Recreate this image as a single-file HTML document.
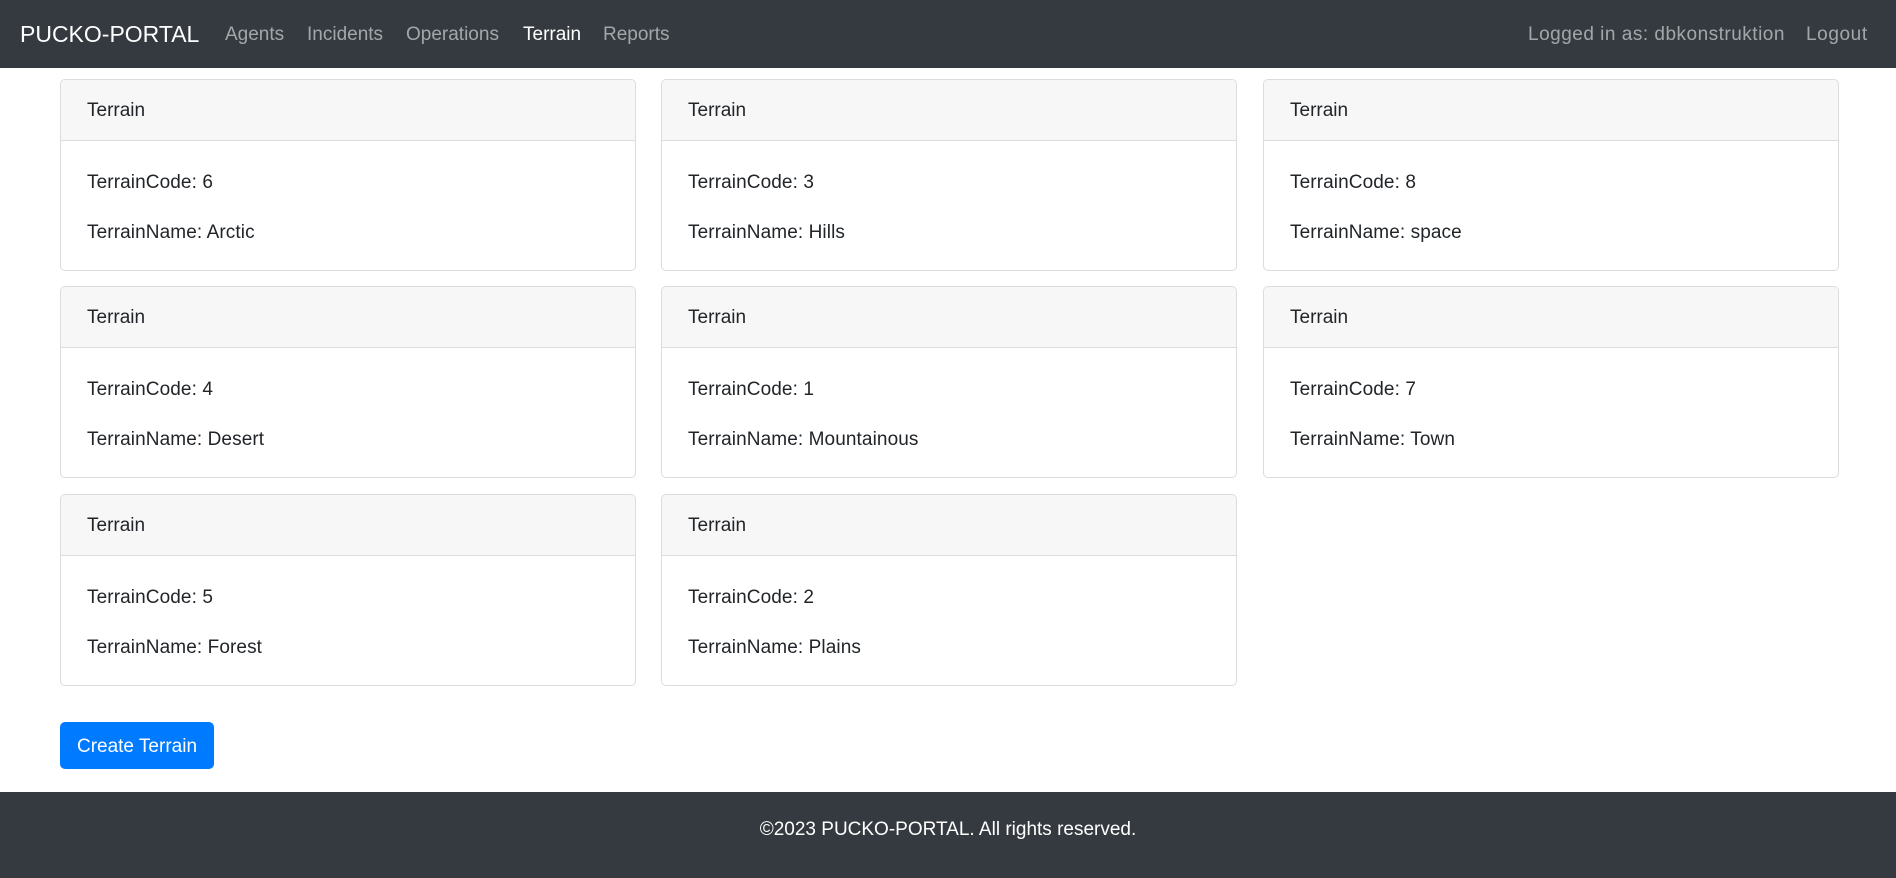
<!DOCTYPE html>
<html><head><style>
*{box-sizing:border-box;margin:0;padding:0}
body{width:1896px;height:878px;position:relative;font-family:"Liberation Sans",sans-serif;color:#212529;background:#fff;overflow:hidden}
.nav{position:absolute;left:0;top:0;width:1896px;height:68px;background:#343a40}
.nav span{position:absolute;top:1px;line-height:68px;font-size:19px;color:rgba(255,255,255,.55)}
.nav .brand{font-size:23px;color:#fff;left:20px;top:0}
.nav .act{color:#fff}
.card{position:absolute;width:576px;height:192px;border:1px solid #dcdcdc;border-radius:5px;overflow:hidden}
.card .h{height:61px;background:#f7f7f7;border-bottom:1px solid #dcdcdc;padding-left:26px;line-height:62px;font-size:19px}
.card p{position:absolute;left:26px;font-size:19px;letter-spacing:.1px}
.btn{position:absolute;left:60px;top:722px;width:154px;height:47px;background:#007bff;color:#fff;border-radius:5px;font-size:19px;line-height:49px;text-align:center}
.foot{position:absolute;left:0;top:792px;width:1896px;height:86px;background:#343a40;color:#fff;text-align:center;line-height:76px;font-size:19px}
</style></head><body>
<div class="nav">
<span class="brand">PUCKO-PORTAL</span>
<span style="left:225px">Agents</span>
<span style="left:307px">Incidents</span>
<span style="left:406px">Operations</span>
<span class="act" style="left:523px">Terrain</span>
<span style="left:603px">Reports</span>
<span style="left:1528px;letter-spacing:.5px">Logged in as: dbkonstruktion</span>
<span style="left:1806px;letter-spacing:.6px">Logout</span>
</div>
<div class="card" style="left:60px;top:79px"><div class="h">Terrain</div><p style="top:92px">TerrainCode: 6</p><p style="top:142px">TerrainName: Arctic</p></div>
<div class="card" style="left:661px;top:79px"><div class="h">Terrain</div><p style="top:92px">TerrainCode: 3</p><p style="top:142px">TerrainName: Hills</p></div>
<div class="card" style="left:1263px;top:79px"><div class="h">Terrain</div><p style="top:92px">TerrainCode: 8</p><p style="top:142px">TerrainName: space</p></div>
<div class="card" style="left:60px;top:286px"><div class="h">Terrain</div><p style="top:92px">TerrainCode: 4</p><p style="top:142px">TerrainName: Desert</p></div>
<div class="card" style="left:661px;top:286px"><div class="h">Terrain</div><p style="top:92px">TerrainCode: 1</p><p style="top:142px">TerrainName: Mountainous</p></div>
<div class="card" style="left:1263px;top:286px"><div class="h">Terrain</div><p style="top:92px">TerrainCode: 7</p><p style="top:142px">TerrainName: Town</p></div>
<div class="card" style="left:60px;top:494px"><div class="h">Terrain</div><p style="top:92px">TerrainCode: 5</p><p style="top:142px">TerrainName: Forest</p></div>
<div class="card" style="left:661px;top:494px"><div class="h">Terrain</div><p style="top:92px">TerrainCode: 2</p><p style="top:142px">TerrainName: Plains</p></div>
<div class="btn">Create Terrain</div>
<div class="foot">©2023 PUCKO-PORTAL. All rights reserved.</div>
</body></html>
